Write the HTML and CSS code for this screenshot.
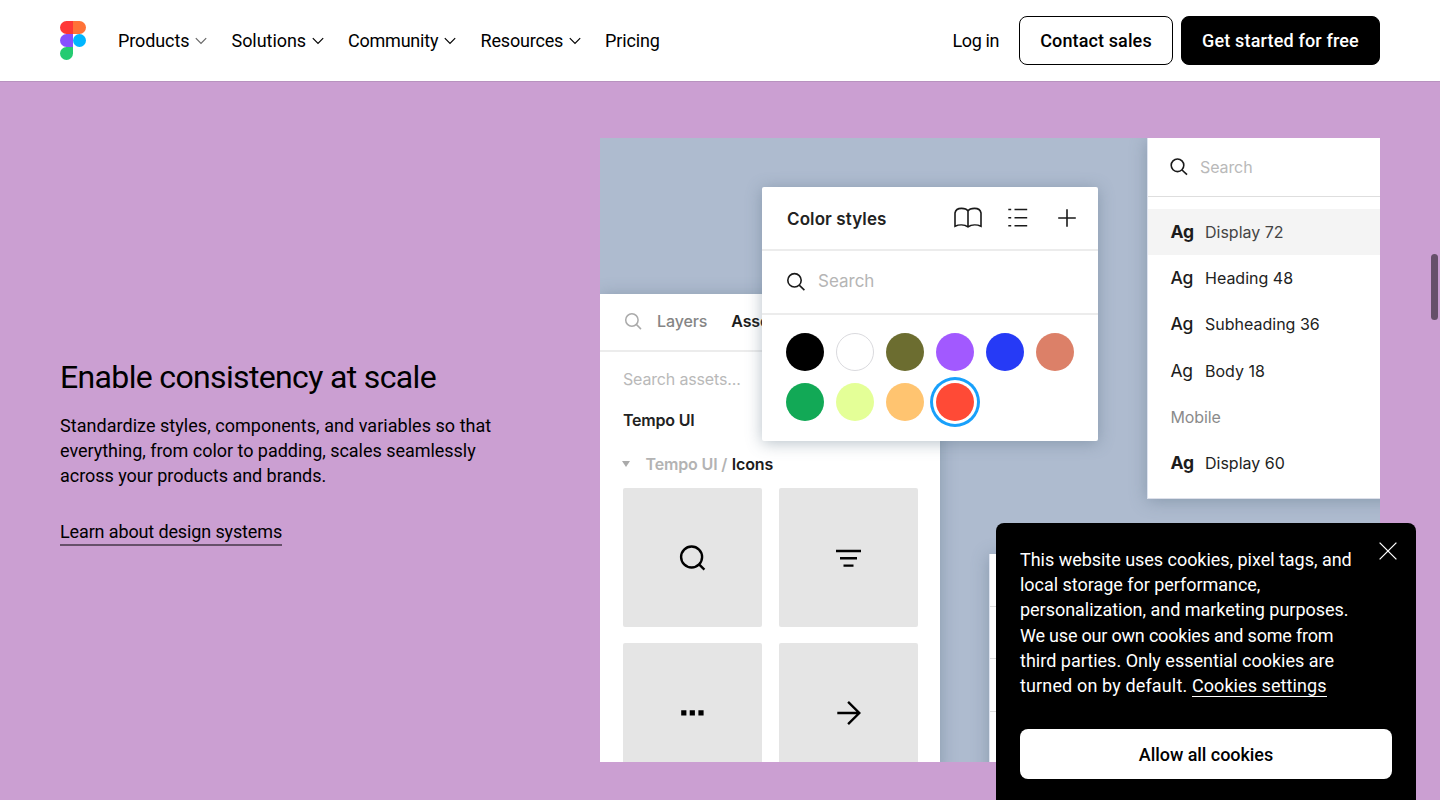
FILE: index.html
```html
<!DOCTYPE html>
<html lang="en">
<head>
<meta charset="utf-8">
<title>Figma</title>
<link rel="stylesheet" href="styles.css">
</head>
<body>
<header class="header">
  <a class="logo" aria-label="Figma">
    <svg width="26" height="39" viewBox="0 0 26 39">
      <path d="M6.5 0H13v13H6.5a6.5 6.5 0 0 1 0-13z" fill="#ff3737"/>
      <path d="M13 0h6.500a6.500 6.500 0 0 1 0 13H13z" fill="#ff7237"/>
      <path d="M6.500 13H13v13H6.500a6.500 6.500 0 0 1 0-13z" fill="#874fff"/>
      <circle cx="19.500" cy="19.500" r="6.500" fill="#00b6ff"/>
      <path d="M6.500 26H13v6.500A6.500 6.500 0 1 1 6.500 26z" fill="#24cb71"/>
    </svg>
  </a>
  <nav class="nav">
    <a class="nav-item"><span class="t-products">Products</span><svg class="chevron dim" viewBox="0 0 12 8"><path d="M.8 1.200L6 6.400l5.200-5.200"/></svg></a>
    <a class="nav-item"><span class="t-solutions">Solutions</span><svg class="chevron" viewBox="0 0 12 8"><path d="M.8 1.200L6 6.400l5.200-5.200"/></svg></a>
    <a class="nav-item"><span class="t-community">Community</span><svg class="chevron" viewBox="0 0 12 8"><path d="M.8 1.200L6 6.400l5.200-5.200"/></svg></a>
    <a class="nav-item"><span class="t-resources">Resources</span><svg class="chevron" viewBox="0 0 12 8"><path d="M.8 1.200L6 6.400l5.200-5.200"/></svg></a>
    <a class="nav-item"><span class="t-pricing">Pricing</span></a>
  </nav>
  <div class="actions">
    <a class="login">Log in</a>
    <a class="btn btn-outline"><span class="t-contact">Contact sales</span></a>
    <a class="btn btn-solid"><span class="t-start">Get started for free</span></a>
  </div>
</header>

<main class="section">
  <div class="copy">
    <h2 class="title">Enable consistency at scale</h2>
    <p class="lead"><span class="l1">Standardize styles, components, and variables so that</span><br>everything, from color to padding, scales seamlessly<br>across your products and brands.</p>
    <a class="link">Learn about design systems</a>
  </div>

  <div class="stage">
    <section class="panel assets">
      <div class="tabs">
        <svg class="tab-search" viewBox="0 0 18 18"><circle cx="7.900" cy="8" r="6.200"/><path d="M12.300 12.400l4.700 4.700"/></svg>
        <span class="tab">Layers</span>
        <span class="tab active">Assets</span>
      </div>
      <div class="assets-body">
        <div class="assets-search">Search assets...</div>
        <div class="library">Tempo UI</div>
        <div class="group"><i class="caret"></i><span class="crumb">Tempo UI /</span><b>Icons</b></div>
        <div class="tiles">
          <div class="tile"><svg width="28" height="28" viewBox="0 0 28 28"><circle cx="12.600" cy="13" r="10.500"/><path d="M19.800 20.200l5.600 5.400"/></svg></div>
          <div class="tile"><svg width="28" height="28" viewBox="0 0 28 28"><path d="M1 7h25M5 14.300h17M8.500 21.600h10"/></svg></div>
          <div class="tile"><svg width="28" height="28" viewBox="0 0 28 28"><path class="fill" d="M2.200 11.300h5.200v5.200H2.200zM10.700 11.300h5.200v5.200h-5.200zM19.400 11.300h5.200v5.200h-5.200z"/></svg></div>
          <div class="tile"><svg width="28" height="28" viewBox="0 0 28 28"><path d="M2.300 14h22M13.100 2.800l11.200 11.200-11.200 11.200"/></svg></div>
        </div>
      </div>
    </section>

    <section class="panel text-styles">
      <div class="ts-search"><svg class="mag" viewBox="0 0 18 18"><circle cx="7.500" cy="7.300" r="6.300"/><path d="M12 12l5 4.700"/></svg><span>Search</span></div>
      <div class="ts-row selected"><b class="ag w7">Ag</b><span>Display 72</span></div>
      <div class="ts-row"><b class="ag w5">Ag</b><span>Heading 48</span></div>
      <div class="ts-row"><b class="ag w5">Ag</b><span>Subheading 36</span></div>
      <div class="ts-row"><b class="ag w4">Ag</b><span>Body 18</span></div>
      <div class="ts-row muted"><span>Mobile</span></div>
      <div class="ts-row"><b class="ag w7">Ag</b><span>Display 60</span></div>
    </section>

    <section class="panel list-panel">
      <div class="list-line"></div><div class="list-line"></div><div class="list-line"></div>
    </section>

    <section class="panel colors">
      <div class="colors-head">
        <b>Color styles</b>
        <div class="tools">
          <svg width="28" height="22" viewBox="0 0 28 22"><path d="M14 4C12.500 1.500 10.500 1.400 7.500 1.400C4 1.400 1.500 3 1 6v13.200c4-1.800 9.500-1.800 13 .7c3.500-2.500 9-2.500 13-.7V6c-.5-3-3-4.600-6.500-4.600C17.500 1.400 15.500 1.500 14 4zM14 4v16"/></svg>
          <svg width="20" height="20" viewBox="0 0 20 20"><path d="M.3 1.500h2.900M6.500 1.500h12.700M.3 9.700h2.900M6.500 9.700h12.700M.3 17.800h2.900M6.500 17.800h12.700"/></svg>
          <svg width="18" height="18" viewBox="0 0 18 18"><path d="M9 .2v17.600M.2 9h17.600"/></svg>
        </div>
      </div>
      <div class="colors-search"><svg class="mag" viewBox="0 0 18 18"><circle cx="7.500" cy="7.300" r="6.700"/><path d="M12.200 12.200l5.200 5"/></svg><span>Search</span></div>
      <div class="swatches">
        <i class="sw black"></i><i class="sw white"></i><i class="sw olive"></i><i class="sw purple"></i><i class="sw blue"></i><i class="sw clay"></i>
        <i class="sw green"></i><i class="sw lime"></i><i class="sw peach"></i><i class="sw red"></i>
      </div>
    </section>
  </div>
</main>

<aside class="cookies">
  <p class="cookies-text">
    <span class="c1">This website uses cookies, pixel tags, and</span>
    <span class="c2">local storage for performance,</span>
    <span class="c3">personalization, and marketing purposes.</span>
    <span class="c4">We use our own cookies and some from</span>
    <span class="c5">third parties. Only essential cookies are</span>
    <span class="c6">turned on by default. <a class="settings">Cookies settings</a></span>
  </p>
  <button class="allow">Allow all cookies</button>
  <svg class="close" viewBox="0 0 18 18"><path d="M.6.600l16.800 16.800M17.400.600L.6 17.400"/></svg>
</aside>
<div class="scroll-thumb"></div>
</body>
</html>
```

FILE: styles.css
```css
* { box-sizing: border-box; }
html, body { height: 100%; }
body {
  margin: 0;
  overflow: hidden;
  background: #cb9fd2;
  color: #000;
  font-family: Roboto, "Liberation Sans", sans-serif;
  font-size: 18px;
  line-height: 25.2px;
  display: flex;
  flex-direction: column;
}

/* Header */
.header {
  height: 82px;
  flex: none;
  display: flex;
  align-items: center;
  padding: 0 60px;
  background: #fff;
  border-bottom: 1px solid #b892bf;
}
.logo { display: flex; width: 58px; }
.nav { display: grid; grid-template-columns: 113.5px 116.500px 132.500px 124.500px auto; }
.nav-item { display: flex; align-items: center; justify-content: space-between; padding-right: 24px; white-space: nowrap; }
.chevron { width: 12px; height: 8px; margin: 1px .5px 0 0; fill: none; stroke: #000; stroke-width: 1.2; }
.chevron.dim { stroke: #666; }
.t-products { letter-spacing: -.1px; }
.t-solutions { letter-spacing: -.05px; }
.t-community { letter-spacing: -.22px; }
.t-resources { letter-spacing: -.18px; }
.t-pricing { letter-spacing: -.15px; }
.actions { margin-left: auto; display: flex; align-items: center; }
.login { margin-right: 20px; letter-spacing: -.4px; }
.btn {
  height: 49px;
  display: flex;
  align-items: center;
  justify-content: center;
  border: 1px solid #000;
  border-radius: 8px;
  font-weight: 500;
  white-space: nowrap;
}
.btn-outline { width: 154px; margin-right: 8px; letter-spacing: .12px; }
.btn-solid { width: 199px; background: #000; color: #fff; letter-spacing: .16px; }

/* Feature section */
.section { flex: 1; display: flex; padding: 56px 60px 38px; }
.copy { width: 540px; display: flex; flex-direction: column; align-items: flex-start; padding-top: 218px; }
.title { margin: 0; font-size: 32px; line-height: 42px; font-weight: 400; letter-spacing: -.65px; white-space: nowrap; }
.lead { margin: 15px 0 0; letter-spacing: -.03px; white-space: nowrap; }
.l1 { letter-spacing: .04px; }
.link { margin-top: 30px; line-height: 25px; border-bottom: 2px solid #66506a; letter-spacing: -.13px; }

.stage {
  position: relative;
  width: 780px;
  height: 624px;
  overflow: hidden;
  background: #aebbcf;
  font-family: Inter, sans-serif;
  font-size: 16px;
  line-height: 20px;
  color: #222;
}
.stage svg { fill: none; stroke: #1a1a1a; stroke-width: 1.6; }
.panel { position: absolute; background: #fff; box-shadow: 0 2px 16px rgba(80, 105, 125, .42); }

.assets { left: 0; top: 156px; width: 340px; height: 480px; }
.tabs { display: flex; align-items: center; height: 58px; padding: 0 0 2px 24px; border-bottom: 2px solid #ececec; }
.stage .tab-search { width: 18px; height: 18px; margin-right: 15px; stroke: #aaa; stroke-width: 1.5; }
.tab { color: #858585; font-weight: 500; margin-right: 24px; letter-spacing: -.12px; }
.tab.active { color: #1c1c1c; font-weight: 600; }
.assets-body { padding: 17px 23px 0; }
.assets-search { color: #b9b9b9; letter-spacing: -.16px; }
.library { margin-top: 21px; font-weight: 600; letter-spacing: -.2px; }
.group { display: flex; align-items: center; margin-top: 24px; font-weight: 600; color: #b3b3b3; letter-spacing: -.15px; }
.group b { margin-left: 4.500px; color: #1c1c1c; font-weight: 600; }
.caret { border: 4px solid transparent; border-top: 6px solid #aaa; border-bottom: 0; margin: 0 15.500px 0 -1px; }
.tiles { display: grid; grid-template-columns: 139px 139px; gap: 16px 17px; margin-top: 14px; }
.tile { height: 139px; background: #e5e5e5; border-radius: 2px; display: flex; align-items: center; justify-content: center; }
.stage .tile svg { stroke: #000; stroke-width: 2.400; }
.stage .tile .fill { fill: #000; stroke: none; }

.text-styles { left: 547px; top: 0; width: 260px; height: 361px; border-left: 1px solid #dde3f0; border-bottom: 1px solid #dde0ea; }
.ts-search { display: flex; align-items: center; height: 59px; padding-left: 22px; border-bottom: 1px solid #dedede; margin-bottom: 12px; color: #b9b9b9; letter-spacing: -.1px; }
.stage .mag { width: 18px; height: 18px; margin-right: 12px; overflow: visible; }
.ts-row { display: flex; align-items: center; height: 46.200px; padding-left: 22.500px; }
.ts-row.selected { background: #f4f4f4; color: #444; }
.ts-row.muted { color: #8b8b8b; letter-spacing: -.1px; }
.ag { width: 34.500px; font-size: 17.500px; color: #1c1c1c; letter-spacing: -.2px; }
.w7 { font-weight: 700; }
.w5 { font-weight: 500; }
.w4 { font-weight: 400; }

.list-panel { left: 388.500px; top: 416px; width: 200px; height: 240px; border-left: 1px solid #dde3f0; }
.list-line { height: 52.500px; border-bottom: 1px solid #dedede; }

.colors { left: 162px; top: 49px; width: 336px; height: 254px; border-radius: 2px; }
.colors-head { display: flex; align-items: center; justify-content: space-between; height: 64px; padding: 0 22px 0 25px; border-bottom: 2px solid #ececec; font-size: 17px; }
.colors-head b { font-weight: 600; letter-spacing: .1px; padding-top: 1px; }
.tools { display: flex; align-items: center; gap: 26px; }
.tools svg:last-child { margin-left: 4px; }
.colors-search { display: flex; align-items: center; height: 64px; padding-left: 24.500px; border-bottom: 2px solid #ececec; font-size: 17px; color: #b5b5b5; }
.colors-search .mag { margin-right: 13.500px; }
.colors-search span { padding-bottom: 2px; }
.swatches { display: grid; grid-template-columns: repeat(6, 38px); gap: 12px 11.850px; padding: 17.500px 0 0 24.300px; }
.sw { height: 38px; border-radius: 50%; }
.black { background: #000; }
.white { background: #fff; border: 1px solid #dadade; }
.olive { background: #6c6d30; }
.purple { background: #a259ff; }
.blue { background: #263af6; }
.clay { background: #dc8068; }
.green { background: #12a956; }
.lime { background: #e4ff97; }
.peach { background: #ffc470; }
.red { background: #ff4a36; box-shadow: 0 0 0 3px #fff, 0 0 0 6px #18a0fb; }

/* Cookie notice, above the page */
.cookies {
  position: fixed;
  right: 24px;
  bottom: 0;
  width: 420px;
  height: 277.500px;
  padding: 24.500px 24px 0;
  border-radius: 8px 8px 0 0;
  background: #000;
  color: #fff;
}
.cookies-text { margin: 0 0 31px; letter-spacing: -.03px; white-space: nowrap; }
.cookies-text span { display: block; }
.c4 { letter-spacing: -.2px; }
.c5 { letter-spacing: .01px; }
.c6 { letter-spacing: .14px; }
.settings { display: inline-block; line-height: 21px; border-bottom: 1px solid #fff; letter-spacing: .08px; }
.allow { display: block; width: 372px; height: 49.500px; padding: 1px 0 0; border: 0; border-radius: 8px; background: #fff; color: #000; font: 500 18px Roboto, sans-serif; letter-spacing: -.05px; }
.close { position: absolute; right: 19px; top: 19px; width: 18px; height: 18px; fill: none; stroke: #fff; stroke-width: 1.3; }

.scroll-thumb { position: fixed; right: 2px; top: 253.500px; width: 7px; height: 66px; border-radius: 4px; background: #66506a; }
```
